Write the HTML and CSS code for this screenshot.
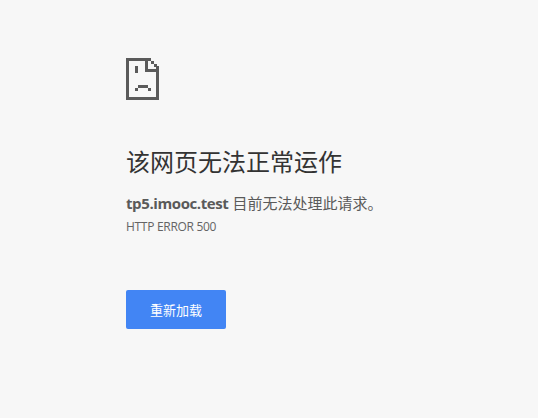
FILE: index.html
```html
<!DOCTYPE html>
<html lang="zh-CN">
<head>
<meta charset="utf-8">
<title>tp5.imooc.test</title>
<link rel="stylesheet" href="styles.css">
</head>
<body>
<main class="page">
  <svg class="icon" width="34" height="42" viewBox="0 0 34 42" shape-rendering="crispEdges" aria-hidden="true">
    <path fill="#5a5a5a" fill-rule="evenodd" d="M0 0H25V3H28V6H31V8H33V42H0ZM3 3V39H30V14H19V3ZM22 3V11H30V9H28V6H25V3Z"/>
    <path fill="#5a5a5a" d="M9 8H12V15H9ZM12 27H22V30H25V33H22V30H12V33H9V30H12Z"/>
  </svg>
  <h1 class="title">该网页无法正常运作</h1>
  <p class="desc"><strong class="host">tp5.imooc.test</strong> 目前无法处理此请求。</p>
  <p class="code">HTTP ERROR 500</p>
  <button class="reload" type="button">重新加载</button>
</main>
</body>
</html>
```

FILE: styles.css
```css
html, body {
  margin: 0;
  height: 100%;
  background: #f7f7f7;
}
body {
  font-family: "Open Sans", "Noto Sans CJK SC", sans-serif;
  color: #5a5a5a;
  overflow: hidden;
}
.page {
  display: flex;
  flex-direction: column;
  align-items: flex-start;
  padding: 58px 0 0 126px;
}
.icon {
  display: block;
}
.title {
  margin: 44px 0 0;
  font-size: 24px;
  font-weight: 400;
  line-height: 36px;
  color: #333;
}
.desc {
  margin: 12px 0 0;
  font-size: 15px;
  line-height: 22px;
}
.host {
  font-weight: 700;
  letter-spacing: -0.4px;
}
.code {
  margin: 4px 0 0;
  font-size: 12px;
  line-height: 18px;
  letter-spacing: -0.3px;
  color: #646464;
}
.reload {
  margin-top: 54px;
  width: 100px;
  height: 39px;
  padding: 0;
  border: 0;
  border-radius: 2px;
  background: #4285f4;
  color: #fff;
  font: 13px "Open Sans", "Noto Sans CJK SC", sans-serif;
}
```
